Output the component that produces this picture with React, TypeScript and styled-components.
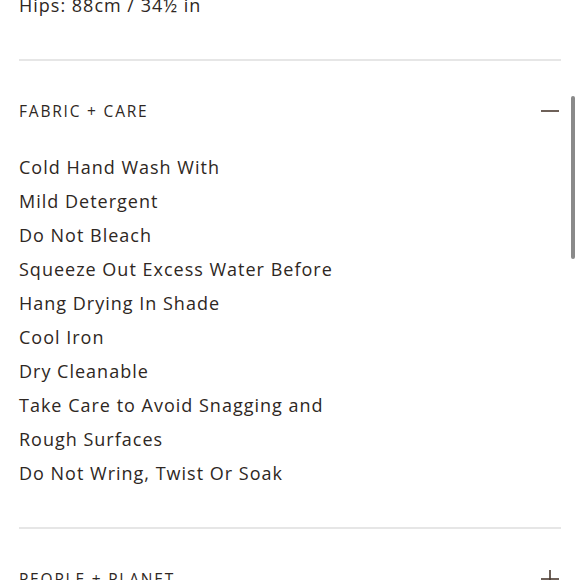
import React from "react";
import styled, { createGlobalStyle } from "styled-components";

const Global = createGlobalStyle`
  html, body { margin: 0; padding: 0; background: #ffffff; overflow: hidden; }
  body { font-family: "Open Sans", "Liberation Sans", sans-serif; color: #2e2723; }
`;

const Page = styled.div`
  position: relative;
  width: 580px;
  height: 580px;
  overflow: hidden;
  box-sizing: border-box;
  padding: 0 19px;
`;

const Sizes = styled.div`
  margin-top: -12px;
  padding-bottom: 37px;
  font-size: 18px;
  line-height: 34px;
  letter-spacing: 1px;
  border-bottom: 2px solid #e6e6e6;
`;

const Section = styled.section`
  padding-top: 36px;
  padding-bottom: 37px;
  border-bottom: 2px solid #e6e6e6;
`;

const Header = styled.div`
  display: flex;
  align-items: center;
  justify-content: space-between;
  height: 28px;
`;

const Title = styled.div`
  font-size: 15.5px;
  letter-spacing: 1.8px;
  text-transform: uppercase;
  color: #2e2723;
`;

const Toggle = styled.svg`
  width: 20px;
  height: 20px;
  margin-right: 1px;
`;

const List = styled.div`
  margin-top: 25px;
  font-size: 18px;
  line-height: 34px;
  letter-spacing: 1px;
`;

const Line = styled.div``;

const Scrollbar = styled.div`
  position: absolute;
  right: 5px;
  top: 96px;
  width: 4px;
  height: 163px;
  border-radius: 2px;
  background: #8a8a8a;
`;

const Icon = ({ open }: { open: boolean }) => (
  <Toggle viewBox="0 0 20 20">
    <line x1="1" y1="10" x2="19" y2="10" stroke="#4a3a30" strokeWidth="1.6" />
    {!open && <line x1="10" y1="1" x2="10" y2="19" stroke="#4a3a30" strokeWidth="1.6" />}
  </Toggle>
);

const care = [
  "Cold Hand Wash With",
  "Mild Detergent",
  "Do Not Bleach",
  "Squeeze Out Excess Water Before",
  "Hang Drying In Shade",
  "Cool Iron",
  "Dry Cleanable",
  "Take Care to Avoid Snagging and",
  "Rough Surfaces",
  "Do Not Wring, Twist Or Soak",
];

export default function App() {
  return (
    <>
      <Global />
      <Page>
        <Sizes>Hips: 88cm / 34½ in</Sizes>
        <Section>
          <Header>
            <Title>Fabric + Care</Title>
            <Icon open />
          </Header>
          <List>
            {care.map((c) => (
              <Line key={c}>{c}</Line>
            ))}
          </List>
        </Section>
        <Section>
          <Header>
            <Title>People + Planet</Title>
            <Icon open={false} />
          </Header>
        </Section>
        <Scrollbar />
      </Page>
    </>
  );
}
